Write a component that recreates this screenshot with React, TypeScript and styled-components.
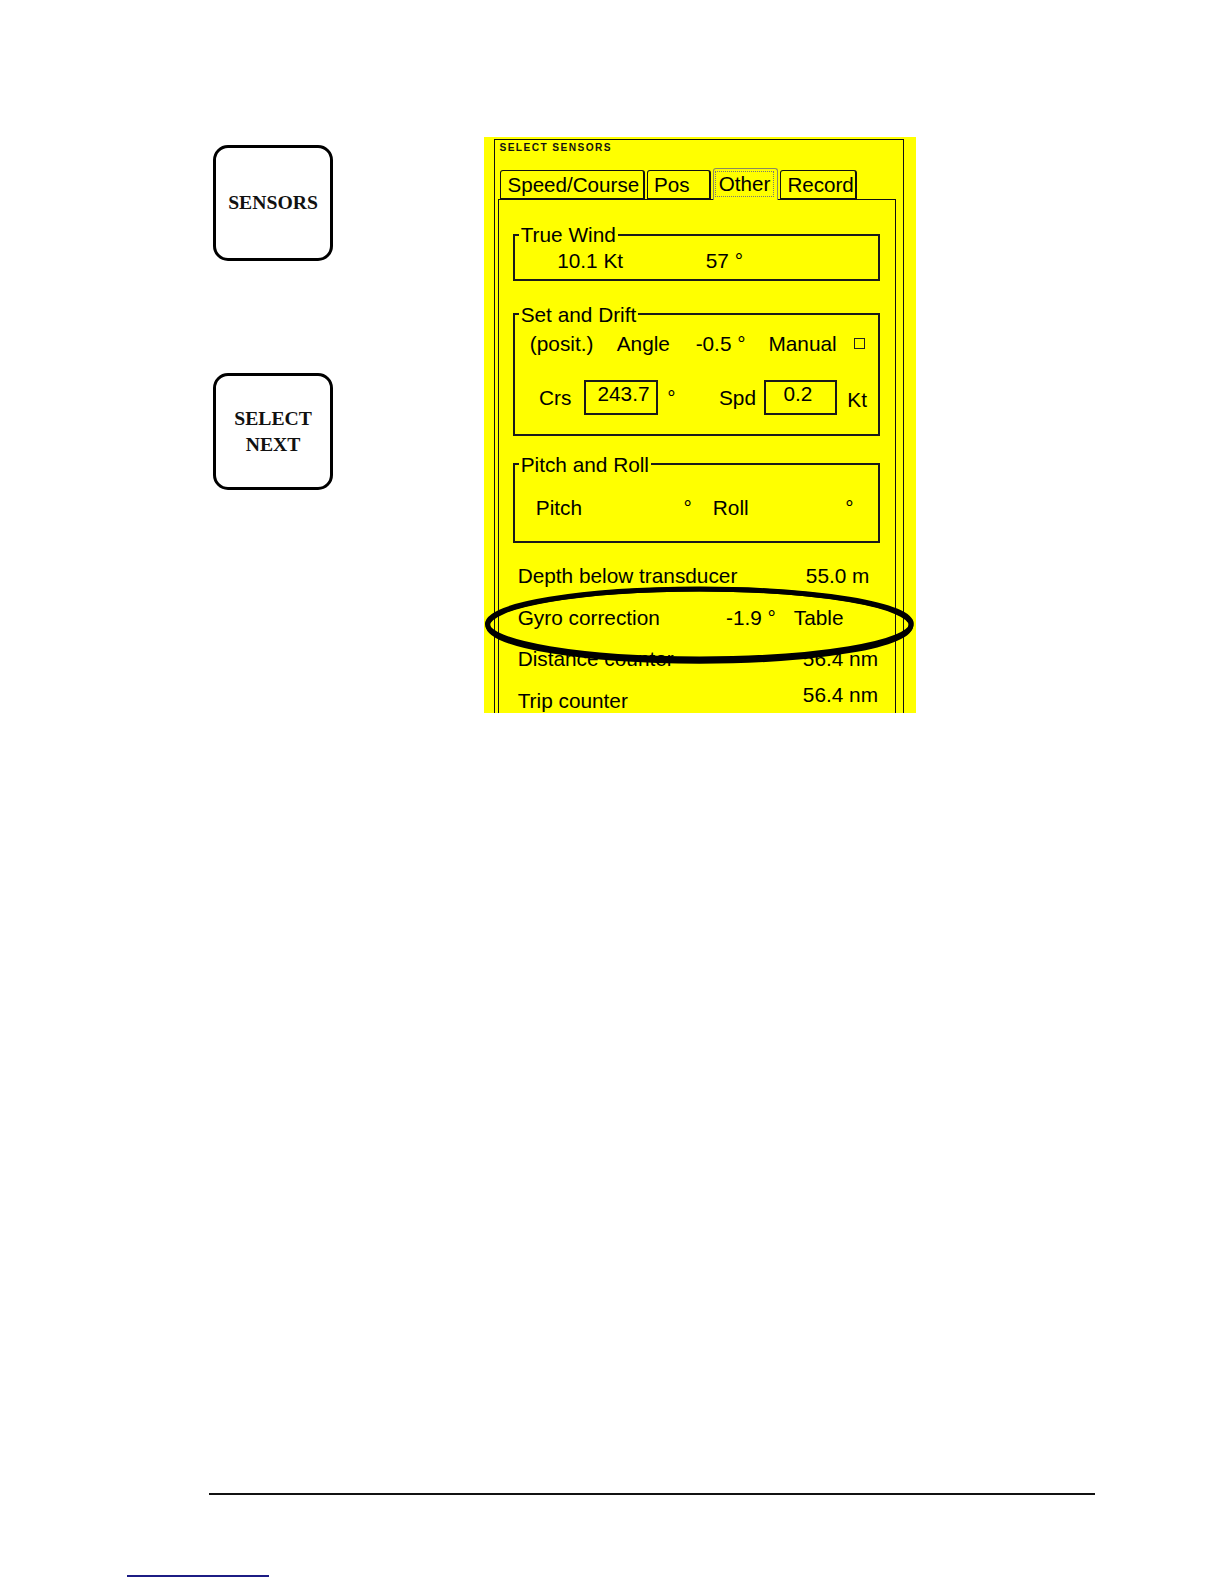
import styled, { createGlobalStyle } from "styled-components"

const GlobalStyle = createGlobalStyle`
  html, body {
    margin: 0;
    padding: 0;
    background: #ffffff;
  }

  body {
    font-family: "Liberation Sans", Arial, sans-serif;
    color: #000;
  }
`

const Page = styled('div')`
  width: 1224px;
  height: 1584px;
  display: flex;
  flex-direction: column;
  overflow: hidden;
`

const TopRow = styled('div')`
  display: flex;
  padding: 136.5px 0 0 213.4px;
`

const KeyColumn = styled('div')`
  display: flex;
  flex-direction: column;
  gap: 112.2px;
  margin-top: 8.1px;
  width: 119.3px;
`

const KeyButton = styled('div')<{ $h: number }>`
  box-sizing: border-box;
  height: ${p => p.$h}px;
  border: 3px solid #000;
  border-radius: 15px;
  display: flex;
  align-items: center;
  justify-content: center;
  text-align: center;
  font-family: "Liberation Serif", "Times New Roman", serif;
  font-weight: bold;
  font-size: 19.7px;
  line-height: 25.3px;
  color: #111;
`

const Panel = styled('div')`
  position: relative;
  margin-left: 151.7px;
  width: 431.8px;
  height: 576.4px;
  background: #ffff00;
  overflow: hidden;
`

const Frame = styled('div')`
  box-sizing: border-box;
  margin: 2px 0 0 10.1px;
  width: 409.5px;
  height: 620px;
  border: 1px solid #111;
  border-bottom: none;
  padding: 2px 0 0 3px;
`

const PanelTitle = styled('div')`
  font-size: 10.2px;
  line-height: 12px;
  font-weight: bold;
  letter-spacing: 1.4px;
  padding-left: 1px;
  color: #111;
`

const TabStrip = styled('div')`
  display: flex;
  align-items: flex-end;
  gap: 2px;
  margin: 14.4px 0 0 2px;
  height: 31.3px;
  position: relative;
  z-index: 1;
`

const Tab = styled('div')<{ $w: number; $active?: boolean }>`
  box-sizing: border-box;
  width: ${p => p.$w}px;
  height: ${p => (p.$active ? 32.3 : 29.3)}px;
  margin-bottom: ${p => (p.$active ? -1 : 0)}px;
  border: 1px solid ${p => (p.$active ? '#8a8a60' : '#111')};
  border-right-width: ${p => (p.$active ? 1 : 2)}px;
  border-bottom: ${p => (p.$active ? 'none' : '1px solid #111')};
  border-radius: 3px 3px 0 0;
  background: #ffff00;
  font-size: 20.6px;
  line-height: 26px;
  padding: ${p => (p.$active ? '2px 0 0 1px' : '1px 0 0 6px')};
  white-space: nowrap;
`

const TabLabel = styled('span')`
  display: inline-block;
  box-sizing: border-box;
  border: 1px dotted #777;
  height: 26.3px;
  padding: 0 3px;
  line-height: 24px;
`

const TabBody = styled('div')`
  box-sizing: border-box;
  width: 397.4px;
  height: 560px;
  border: 1px solid #111;
  border-bottom: none;
  padding-top: 22.9px;
  font-size: 20.8px;
`

const Group = styled('fieldset')<{ $pt: number; $pb: number; $mt: number }>`
  box-sizing: border-box;
  width: 367px;
  margin: ${p => p.$mt}px 0 0 13.2px;
  padding: ${p => p.$pt}px 0 ${p => p.$pb}px 0;
  border: 2px solid #1a1a1a;
  min-inline-size: 0;
`

const GroupLegend = styled('legend')`
  margin-left: 4px;
  padding: 0 2px;
  font-size: 20.8px;
  line-height: 23px;
`

const GroupRow = styled('div')<{ $cols: string; $pl: number; $h: number }>`
  display: grid;
  grid-template-columns: ${p => p.$cols};
  align-items: center;
  padding-left: ${p => p.$pl}px;
  height: ${p => p.$h}px;
  line-height: 23px;
  white-space: nowrap;
`

const RowGap = styled('div')<{ $h: number }>`
  height: ${p => p.$h}px;
`

const Field = styled('div')<{ $w: number; $pl: number }>`
  box-sizing: border-box;
  width: ${p => p.$w}px;
  height: 34.4px;
  border: 2px solid #1a1a1a;
  padding-left: ${p => p.$pl}px;
  line-height: 23px;
`

const Check = styled('span')`
  display: inline-block;
  box-sizing: border-box;
  width: 11px;
  height: 11px;
  border: 1.5px solid #222;
`

const Unit = styled('span')`
  margin-top: 5px;
`

const DataList = styled('div')`
  margin-top: 12.6px;
  padding-left: 18.2px;
`

const DataRow = styled('div')<{ $cols: string }>`
  display: grid;
  grid-template-columns: ${p => p.$cols};
  align-items: center;
  height: 41.5px;
  white-space: nowrap;
`

const DataValue = styled('span')<{ $up?: boolean }>`
  margin-bottom: ${p => (p.$up ? 12 : 0)}px;
`

const Ring = styled('svg')`
  position: absolute;
  left: 0;
  top: 448px;
  pointer-events: none;
`

const Rule = styled('div')`
  margin: 780.6px 0 0 209.3px;
  width: 885.8px;
  height: 1.5px;
  background: #111;
`

const LinkLine = styled('div')`
  margin: 80px 0 0 127px;
  width: 142px;
  height: 2px;
  background: #1c1c84;
`

const App = (): JSX.Element => {

  return (
    <Page>
      <GlobalStyle />

      <TopRow>
        <KeyColumn>
          <KeyButton $h={116.3}>SENSORS</KeyButton>
          <KeyButton $h={117.3}>SELECT<br />NEXT</KeyButton>
        </KeyColumn>

        <Panel>
          <Frame>
            <PanelTitle>SELECT SENSORS</PanelTitle>

            <TabStrip>
              <Tab $w={144.6}>Speed/Course</Tab>
              <Tab $w={63.7}>Pos</Tab>
              <Tab $w={65.7} $active><TabLabel>Other</TabLabel></Tab>
              <Tab $w={76.9}>Record</Tab>
            </TabStrip>

            <TabBody>
              <Group $mt={0} $pt={3.3} $pb={6.7}>
                <GroupLegend>True Wind</GroupLegend>
                <GroupRow $cols="148.6px auto" $pl={42.5} $h={23}>
                  <span>10.1 Kt</span>
                  <span>57 °</span>
                </GroupRow>
              </Group>

              <Group $mt={21.9} $pt={6.3} $pb={19.2}>
                <GroupLegend>Set and Drift</GroupLegend>
                <GroupRow $cols="86.9px 78.9px 72.8px 86px auto" $pl={15.2} $h={23}>
                  <span>(posit.)</span>
                  <span>Angle</span>
                  <span>-0.5 °</span>
                  <span>Manual</span>
                  <Check />
                </GroupRow>
                <RowGap $h={24.9} />
                <GroupRow $cols="45.5px 82.9px 51.6px 45.5px 82.9px auto" $pl={24.3} $h={34.4}>
                  <span>Crs</span>
                  <Field $w={73.8} $pl={11}>243.7</Field>
                  <span>°</span>
                  <span>Spd</span>
                  <Field $w={72.8} $pl={17}>0.2</Field>
                  <Unit>Kt</Unit>
                </GroupRow>
              </Group>

              <Group $mt={16.8} $pt={20.5} $pb={21.9}>
                <GroupLegend>Pitch and Roll</GroupLegend>
                <GroupRow $cols="147.7px 29.3px 132.5px auto" $pl={21.2} $h={23}>
                  <span>Pitch</span>
                  <span>°</span>
                  <span>Roll</span>
                  <span>°</span>
                </GroupRow>
              </Group>

              <DataList>
                <DataRow $cols="288.2px auto">
                  <span>Depth below transducer</span>
                  <DataValue>55.0 m</DataValue>
                </DataRow>
                <DataRow $cols="208.3px 67.8px auto">
                  <span>Gyro correction</span>
                  <DataValue>-1.9 °</DataValue>
                  <DataValue>Table</DataValue>
                </DataRow>
                <DataRow $cols="285.2px auto">
                  <span>Distance counter</span>
                  <DataValue>56.4 nm</DataValue>
                </DataRow>
                <DataRow $cols="285.2px auto">
                  <span>Trip counter</span>
                  <DataValue $up>56.4 nm</DataValue>
                </DataRow>
              </DataList>
            </TabBody>
          </Frame>

          <Ring width={432} height={80} viewBox="0 0 432 80">
            <ellipse cx={215.4} cy={39} rx={211.9} ry={34.9} fill="none" stroke="#000" strokeWidth={5} />
            <ellipse cx={215.4} cy={40.4} rx={211.6} ry={36.1} fill="none" stroke="#000" strokeWidth={4.4} />
          </Ring>
        </Panel>
      </TopRow>

      <Rule />
      <LinkLine />
    </Page>
  )
}

export default App
